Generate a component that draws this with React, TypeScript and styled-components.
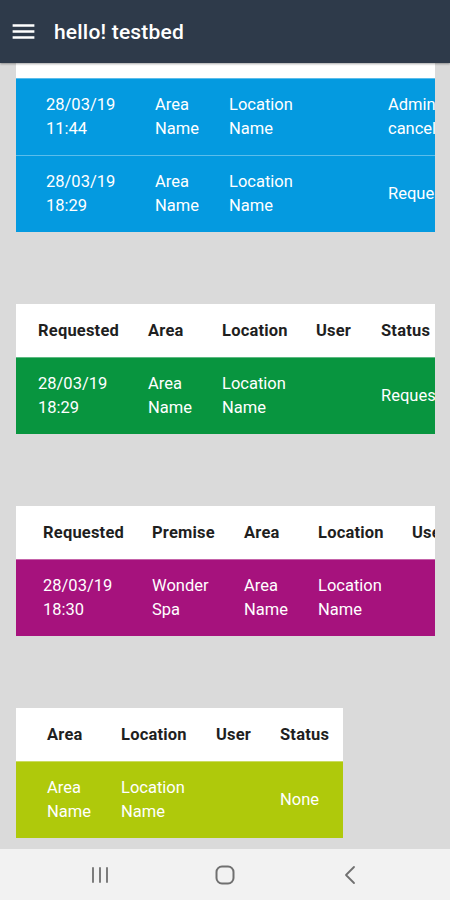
import React, { useLayoutEffect, useRef } from "react";
import styled, { createGlobalStyle } from "styled-components";

const GlobalStyle = createGlobalStyle`
  html, body { margin: 0; padding: 0; }
  body { font-family: Roboto, "Noto Sans", Arial, sans-serif; background: #dadada; }
  * { box-sizing: border-box; }
`;

const Screen = styled.div`
  width: 450px;
  height: 900px;
  display: flex;
  flex-direction: column;
  overflow: hidden;
`;

const AppBar = styled.header`
  height: 63px;
  flex: none;
  background: #2e3a4a;
  display: flex;
  align-items: center;
  padding-left: 9px;
  gap: 16px;
  box-shadow: 0 1px 2px rgba(0, 0, 0, 0.35);
  position: relative;
  z-index: 1;
`;

const MenuButton = styled.button`
  border: 0;
  background: none;
  padding: 0;
  width: 29px;
  height: 29px;
  display: flex;
  color: #ffffff;
`;

const Title = styled.h1`
  margin: 0;
  font-size: 21px;
  font-weight: 500;
  color: #ffffff;
  letter-spacing: 0.2px;
  padding-top: 1px;
`;

const Viewport = styled.main`
  flex: 1;
  overflow: hidden;
  background: #dadada;
`;

const Stack = styled.div`
  display: flex;
  flex-direction: column;
  gap: 72px;
  padding: 0 0 40px 16px;
`;

const Card = styled.section<{ $w: number }>`
  width: ${(p) => p.$w}px;
  overflow: hidden;
  background: #ffffff;
  flex: none;
`;

const Row = styled.div<{ $cols: string; $pad: number }>`
  display: grid;
  grid-template-columns: ${(p) => p.$cols};
  padding-left: ${(p) => p.$pad}px;
  width: max-content;
  align-items: center;
`;

const HeadRow = styled(Row)`
  height: 53px;
  background: #ffffff;
  color: #1f1f1f;
  font-size: 16.5px;
  font-weight: 700;
  letter-spacing: 0.2px;
`;

const DataRow = styled(Row)<{ $bg: string }>`
  height: 77px;
  background: ${(p) => p.$bg};
  border-top: 1px solid rgba(255, 255, 255, 0.35);
  color: #ffffff;
  font-size: 16.5px;
  line-height: 24px;
`;

const Cell = styled.div`
  white-space: nowrap;
`;

const Line = styled.span`
  display: block;
`;

const NavBar = styled.nav`
  height: 51px;
  flex: none;
  background: #f2f2f2;
  display: flex;
  justify-content: center;
  align-items: center;
  gap: 101px;
`;

const NavIcon = styled.div`
  width: 24px;
  height: 24px;
  display: flex;
  align-items: center;
  justify-content: center;
  color: #707070;
`;

type Table = {
  width: number;
  cols: string;
  pad: number;
  scrollX: number;
  bg: string;
  head: string[];
  rows: string[][][];
};

const tables: Table[] = [
  {
    width: 419,
    cols: "109px 74px 94px 65px 150px",
    pad: 30,
    scrollX: 0,
    bg: "#049ae0",
    head: ["Requested", "Area", "Location", "User", "Status"],
    rows: [
      [["28/03/19", "11:44"], ["Area", "Name"], ["Location", "Name"], [], ["Administrator", "cancelled"]],
      [["28/03/19", "18:29"], ["Area", "Name"], ["Location", "Name"], [], ["Requested"]],
    ],
  },
  {
    width: 419,
    cols: "110px 74px 94px 65px 110px",
    pad: 22,
    scrollX: 0,
    bg: "#08953f",
    head: ["Requested", "Area", "Location", "User", "Status"],
    rows: [[["28/03/19", "18:29"], ["Area", "Name"], ["Location", "Name"], [], ["Requested"]]],
  },
  {
    width: 419,
    cols: "109px 92px 74px 94px 70px 110px",
    pad: 27,
    scrollX: 0,
    bg: "#a6127d",
    head: ["Requested", "Premise", "Area", "Location", "User", "Status"],
    rows: [[["28/03/19", "18:30"], ["Wonder", "Spa"], ["Area", "Name"], ["Location", "Name"], [], ["Requested"]]],
  },
  {
    width: 327,
    cols: "106px 95px 74px 95px 64px 63px",
    pad: 27,
    scrollX: 197,
    bg: "#afc90b",
    head: ["Requested", "Premise", "Area", "Location", "User", "Status"],
    rows: [[["28/03/19", "18:31"], ["Wonder", "Spa"], ["Area", "Name"], ["Location", "Name"], [], ["None"]]],
  },
];

function TableCard({ t }: { t: Table }) {
  const ref = useRef<HTMLElement>(null);
  useLayoutEffect(() => {
    if (ref.current) ref.current.scrollLeft = t.scrollX;
  }, [t.scrollX]);
  return (
    <Card $w={t.width} ref={ref}>
      <HeadRow $cols={t.cols} $pad={t.pad}>
        {t.head.map((h) => (
          <Cell key={h}>{h}</Cell>
        ))}
      </HeadRow>
      {t.rows.map((r, i) => (
        <DataRow key={i} $cols={t.cols} $pad={t.pad} $bg={t.bg}>
          {r.map((lines, j) => (
            <Cell key={j}>
              {lines.map((l) => (
                <Line key={l}>{l}</Line>
              ))}
            </Cell>
          ))}
        </DataRow>
      ))}
    </Card>
  );
}

export default function App() {
  const vp = useRef<HTMLElement>(null);
  useLayoutEffect(() => {
    if (vp.current) vp.current.scrollTop = 38;
  }, []);
  return (
    <Screen>
      <GlobalStyle />
      <AppBar>
        <MenuButton aria-label="menu">
          <svg width="29" height="29" viewBox="0 0 24 24" fill="currentColor">
            <path d="M3 18h18v-2H3v2zm0-5h18v-2H3v2zm0-7v2h18V6H3z" />
          </svg>
        </MenuButton>
        <Title>hello! testbed</Title>
      </AppBar>
      <Viewport ref={vp}>
        <Stack>
          {tables.map((t, i) => (
            <TableCard key={i} t={t} />
          ))}
        </Stack>
      </Viewport>
      <NavBar>
        <NavIcon>
          <svg width="24" height="24" viewBox="0 0 24 24" fill="none" stroke="currentColor" strokeWidth="1.8" strokeLinecap="round">
            <path d="M5 5v14M12 5v14M19 5v14" />
          </svg>
        </NavIcon>
        <NavIcon>
          <svg width="24" height="24" viewBox="0 0 24 24" fill="none" stroke="currentColor" strokeWidth="2">
            <rect x="3.5" y="3.5" width="17" height="17" rx="5.5" />
          </svg>
        </NavIcon>
        <NavIcon>
          <svg width="24" height="24" viewBox="0 0 24 24" fill="none" stroke="currentColor" strokeWidth="1.8" strokeLinecap="round" strokeLinejoin="round">
            <path d="M16 4l-8 8 8 8" />
          </svg>
        </NavIcon>
      </NavBar>
    </Screen>
  );
}
